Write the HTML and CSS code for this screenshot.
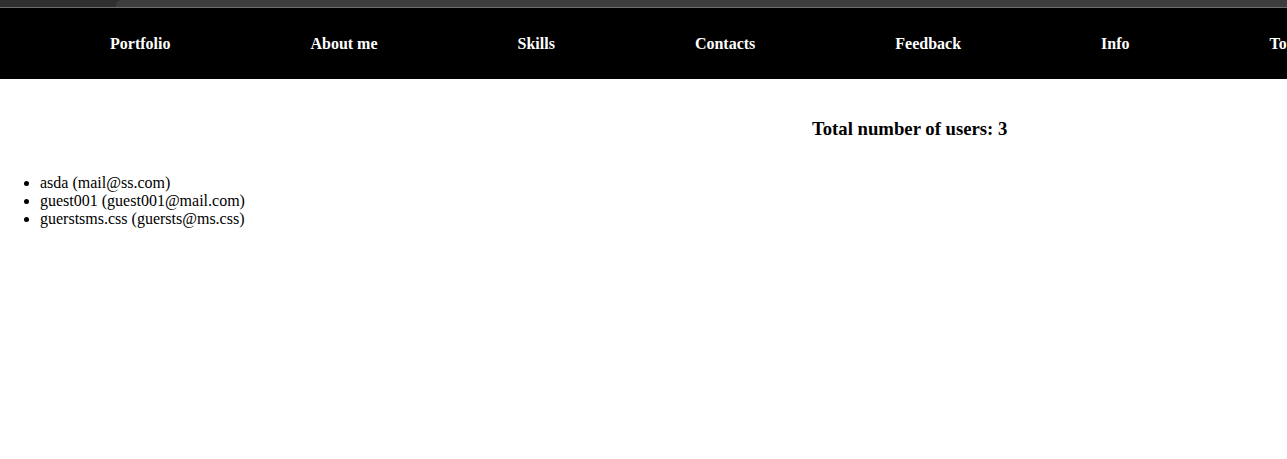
FILE: index.html
```html
<!DOCTYPE html>
<html lang="en">
<head>
<meta charset="utf-8">
<title>Users</title>
<link rel="stylesheet" href="styles.css">
</head>
<body>
<div class="chrome">
  <div class="chrome-tab"></div>
  <div class="chrome-rest"></div>
</div>
<nav class="topnav">
  <a href="#">Portfolio</a>
  <a href="#">About me</a>
  <a href="#">Skills</a>
  <a href="#">Contacts</a>
  <a href="#">Feedback</a>
  <a href="#">Info</a>
  <a href="#">Top</a>
</nav>
<main class="content">
  <h3 class="total">Total number of users: 3</h3>
  <ul class="users">
    <li>asda (mail@ss.com)</li>
    <li>guest001 (guest001@mail.com)</li>
    <li>guerstsms.css (guersts@ms.css)</li>
  </ul>
</main>
</body>
</html>
```
FILE: styles.css
```css
html, body {
  margin: 0;
  padding: 0;
  background: #fff;
  overflow: hidden;
  font-family: "Liberation Serif", "Times New Roman", serif;
  color: #000;
}

.chrome {
  display: flex;
  height: 7px;
  background: #2f2f2f;
  border-bottom: 1px solid #6e6e6e;
}

.chrome-tab {
  width: 116px;
  background: #2f2f2f;
}

.chrome-rest {
  flex: 1;
  background: #3d3d3d;
  border-top-left-radius: 6px;
}

.topnav {
  display: flex;
  align-items: center;
  gap: 140px;
  height: 71px;
  padding-left: 110px;
  background: #000;
  white-space: nowrap;
  overflow: hidden;
}

.topnav a {
  color: #fff;
  font-weight: bold;
  font-size: 16px;
  text-decoration: none;
  flex: none;
}

.content {
  display: flex;
  flex-direction: column;
}

.total {
  font-size: 18.72px;
  font-weight: bold;
  margin: 39px 0 34px 812px;
}

.users {
  margin: 0;
  padding-left: 40px;
  font-size: 16px;
}
```
